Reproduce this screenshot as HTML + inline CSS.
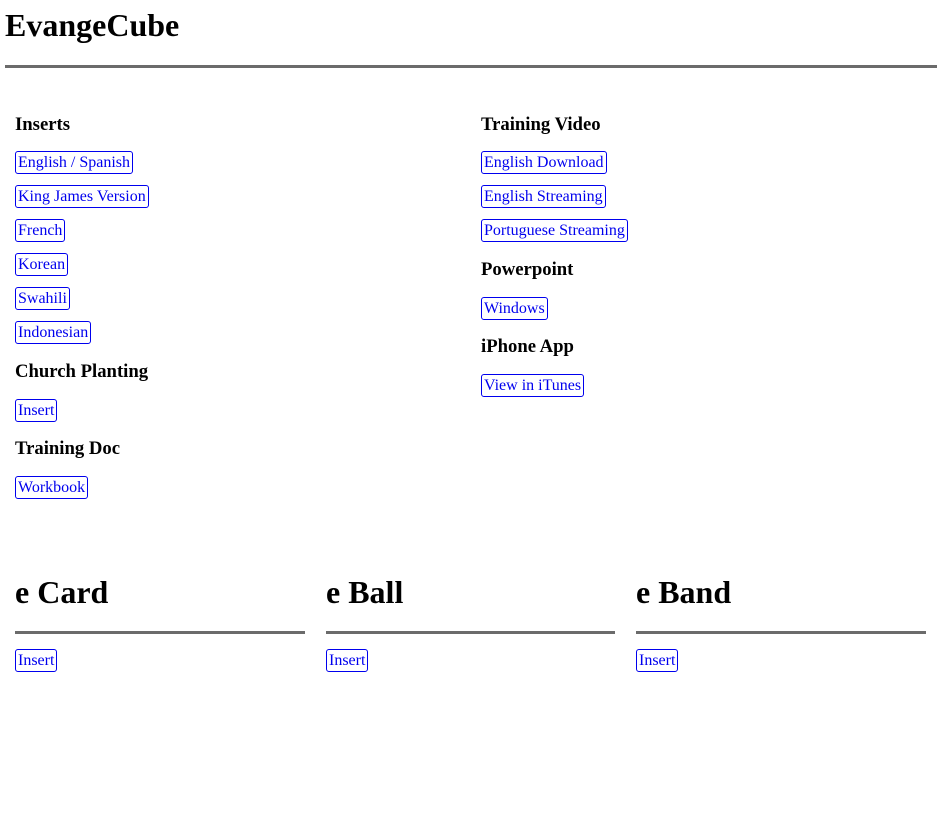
<!DOCTYPE html>
<html><head><style>
body{margin:0;background:#fff;font-family:"Liberation Serif",serif;color:#000;}
.a{position:absolute;white-space:nowrap;}
.t{font-size:32px;font-weight:bold;line-height:40px;}
.h{font-size:18.7px;font-weight:bold;line-height:22px;}
.l{font-size:16px;line-height:21px;color:#00e;border:1px solid #00e;border-radius:3px;padding:0 2px;}
.r{position:absolute;height:3px;background:#6b6b6b;}
</style></head><body>
<div class="a t" style="left:5px;top:5px">EvangeCube</div>
<div class="r" style="left:5px;top:65px;width:932px"></div>

<div class="a h" style="left:15px;top:114px">Inserts</div>
<div class="a l" style="left:15px;top:151px">English / Spanish</div>
<div class="a l" style="left:15px;top:185px">King James Version</div>
<div class="a l" style="left:15px;top:219px">French</div>
<div class="a l" style="left:15px;top:253px">Korean</div>
<div class="a l" style="left:15px;top:287px">Swahili</div>
<div class="a l" style="left:15px;top:321px">Indonesian</div>
<div class="a h" style="left:15px;top:361px">Church Planting</div>
<div class="a l" style="left:15px;top:399px">Insert</div>
<div class="a h" style="left:15px;top:438px">Training Doc</div>
<div class="a l" style="left:15px;top:476px">Workbook</div>

<div class="a h" style="left:481px;top:114px">Training Video</div>
<div class="a l" style="left:481px;top:151px">English Download</div>
<div class="a l" style="left:481px;top:185px">English Streaming</div>
<div class="a l" style="left:481px;top:219px">Portuguese Streaming</div>
<div class="a h" style="left:481px;top:259px">Powerpoint</div>
<div class="a l" style="left:481px;top:297px">Windows</div>
<div class="a h" style="left:481px;top:336px">iPhone App</div>
<div class="a l" style="left:481px;top:374px">View in iTunes</div>

<div class="a t" style="left:15px;top:572px">e Card</div>
<div class="r" style="left:15px;top:631px;width:290px"></div>
<div class="a l" style="left:15px;top:649px">Insert</div>
<div class="a t" style="left:326px;top:572px">e Ball</div>
<div class="r" style="left:326px;top:631px;width:289px"></div>
<div class="a l" style="left:326px;top:649px">Insert</div>
<div class="a t" style="left:636px;top:572px">e Band</div>
<div class="r" style="left:636px;top:631px;width:290px"></div>
<div class="a l" style="left:636px;top:649px">Insert</div>
</body></html>
